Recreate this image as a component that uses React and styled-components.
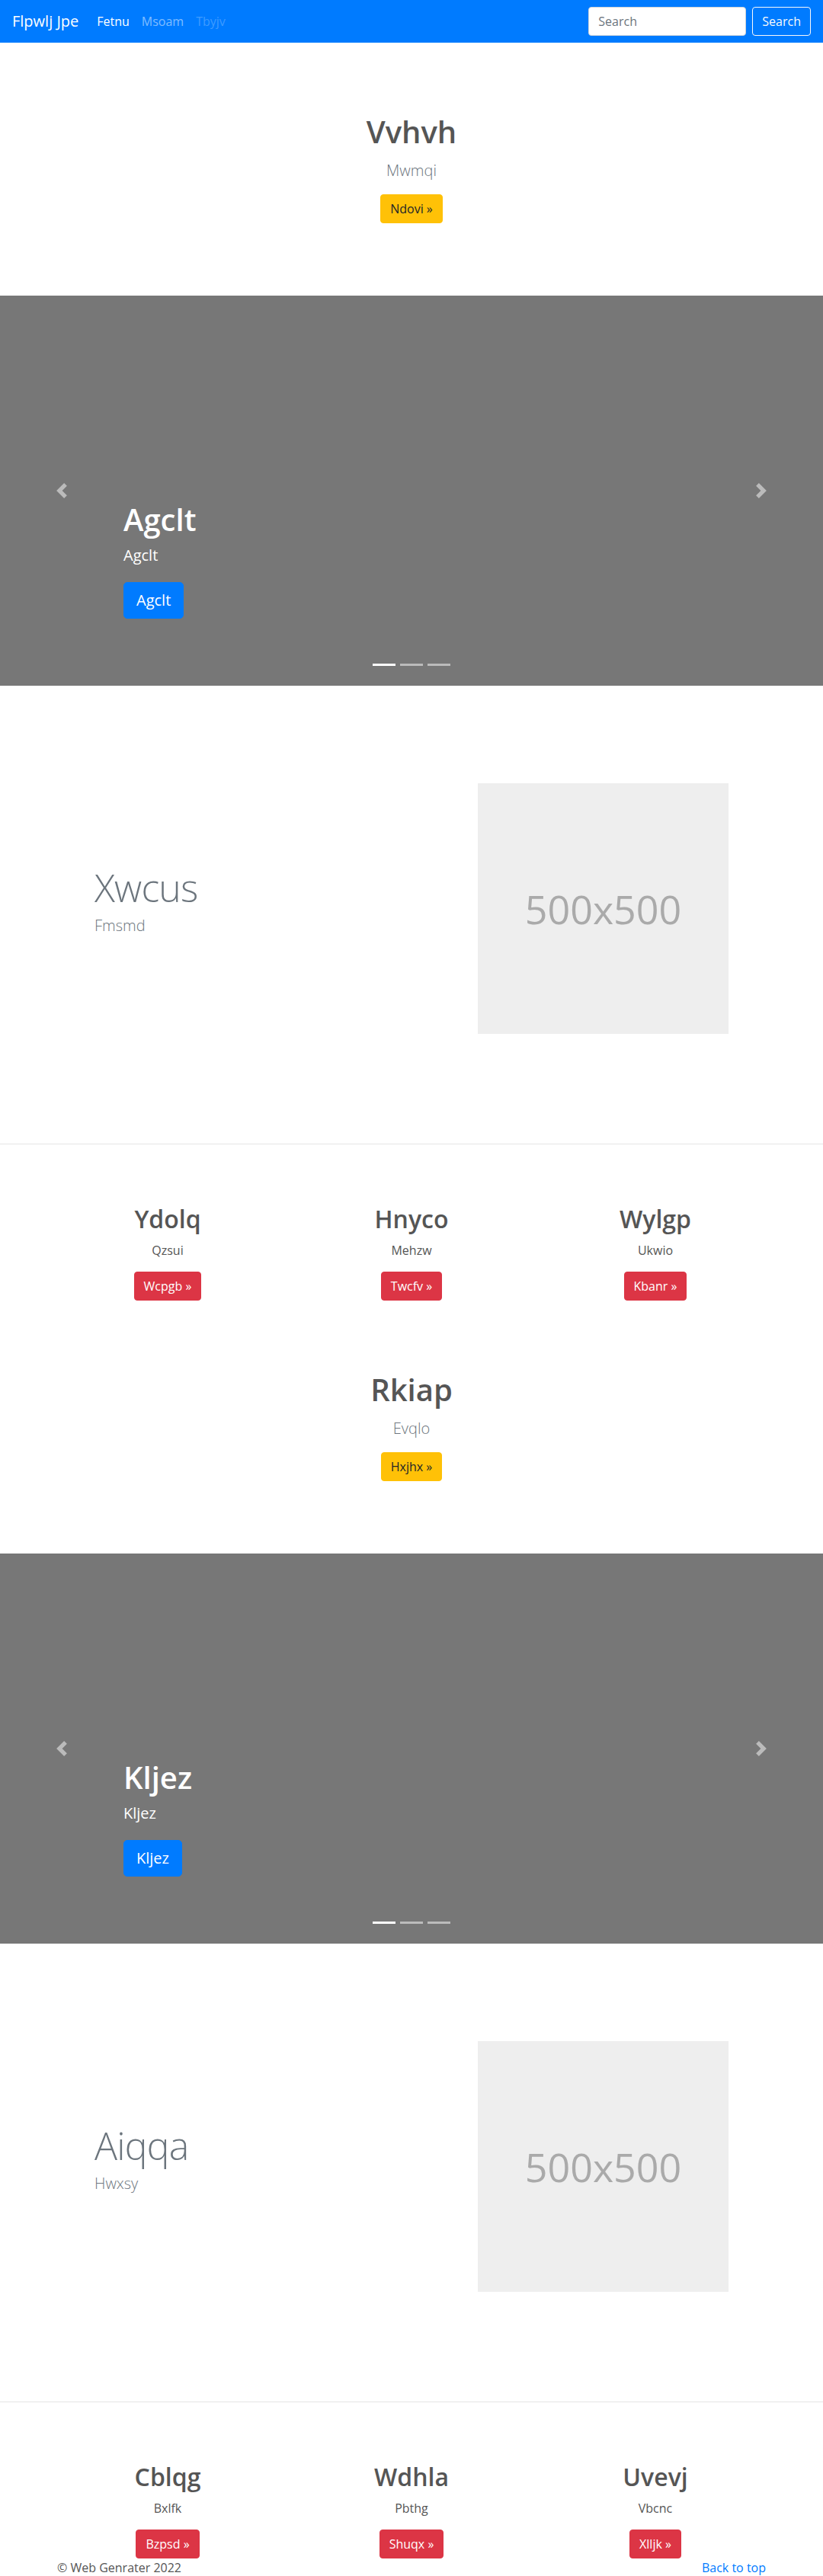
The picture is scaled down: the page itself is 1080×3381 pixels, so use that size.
import React from "react";
import styled, { createGlobalStyle } from "styled-components";

const GlobalStyle = createGlobalStyle`
  * { box-sizing: border-box; }
  body {
    margin: 0;
    font-family: "Open Sans", "Noto Sans", "Liberation Sans", sans-serif;
    font-size: 16px;
    line-height: 1.5;
    color: #212529;
    background: #fff;
  }
`;

const heroes = [
  { title: "Vvhvh", lead: "Mwmqi", button: "Ndovi »" },
  { title: "Rkiap", lead: "Evqlo", button: "Hxjhx »" },
];

const slides = ["Agclt", "Kljez"];

const features = [
  { title: "Xwcus", lead: "Fmsmd" },
  { title: "Aiqqa", lead: "Hwxsy" },
];

const columns = [
  [
    { title: "Ydolq", text: "Qzsui", button: "Wcpgb »" },
    { title: "Hnyco", text: "Mehzw", button: "Twcfv »" },
    { title: "Wylgp", text: "Ukwio", button: "Kbanr »" },
  ],
  [
    { title: "Cblqg", text: "Bxlfk", button: "Bzpsd »" },
    { title: "Wdhla", text: "Pbthg", button: "Shuqx »" },
    { title: "Uvevj", text: "Vbcnc", button: "Xlljk »" },
  ],
];

const Hero = ({ data }) => (
  <HeroSection>
    <HeroTitle>{data.title}</HeroTitle>
    <HeroLead>{data.lead}</HeroLead>
    <Button variant="warning">{data.button}</Button>
  </HeroSection>
);

const Chevron = ({ dir }) => (
  <svg width="20" height="20" viewBox="0 0 8 8" fill="#fff">
    {dir === "prev" ? (
      <path d="M5.25 0l-4 4 4 4 1.5-1.5L4.25 4l2.5-2.5L5.25 0z" />
    ) : (
      <path d="M2.75 0l-1.5 1.5L3.75 4l-2.5 2.5L2.75 8l4-4-4-4z" />
    )}
  </svg>
);

const Carousel = ({ label }) => (
  <CarouselBox>
    <Caption>
      <CaptionTitle>{label}</CaptionTitle>
      <CaptionText>{label}</CaptionText>
      <Button variant="primary" size="lg">
        {label}
      </Button>
    </Caption>
    <Control side="left">
      <Chevron dir="prev" />
    </Control>
    <Control side="right">
      <Chevron dir="next" />
    </Control>
    <Indicators>
      {[0, 1, 2].map((i) => (
        <Indicator key={i} active={i === 0} />
      ))}
    </Indicators>
  </CarouselBox>
);

const Featurette = ({ data }) => (
  <FeatureSection>
    <FeatureText>
      <FeatureHeading>{data.title}</FeatureHeading>
      <FeatureLead>{data.lead}</FeatureLead>
    </FeatureText>
    <Placeholder>500x500</Placeholder>
  </FeatureSection>
);

const Columns = ({ items }) => (
  <ColumnsSection>
    {items.map((item, index) => (
      <Column key={index}>
        <ColumnTitle>{item.title}</ColumnTitle>
        <ColumnText>{item.text}</ColumnText>
        <Button variant="danger">{item.button}</Button>
      </Column>
    ))}
  </ColumnsSection>
);

const App = () => {
  return (
    <>
      <GlobalStyle />
      <Navbar>
        <Brand>Flpwlj Jpe</Brand>
        <NavLinks>
          <NavLink state="active">Fetnu</NavLink>
          <NavLink>Msoam</NavLink>
          <NavLink state="disabled">Tbyjv</NavLink>
        </NavLinks>
        <SearchForm>
          <SearchInput placeholder="Search" />
          <OutlineButton>Search</OutlineButton>
        </SearchForm>
      </Navbar>

      <Hero data={heroes[0]} />
      <Carousel label={slides[0]} />
      <Featurette data={features[0]} />
      <Divider />
      <Columns items={columns[0]} />

      <Hero data={heroes[1]} />
      <Carousel label={slides[1]} />
      <Featurette data={features[1]} />
      <Divider />
      <Columns items={columns[1]} />

      <Footer>
        <FooterText>© Web Genrater 2022</FooterText>
        <BackLink href="#">Back to top</BackLink>
      </Footer>
    </>
  );
};

export default App;

const Navbar = styled.nav`
  display: flex;
  align-items: center;
  height: 56px;
  padding: 8px 16px;
  background-color: #007bff;
`;

const Brand = styled.a`
  font-size: 20px;
  line-height: 30px;
  color: #fff;
  margin-right: 16px;
`;

const NavLinks = styled.div`
  display: flex;
  flex: 1;
`;

const NavLink = styled.a`
  padding: 0 8px;
  font-size: 16px;
  font-weight: 500;
  color: ${(p) =>
    p.state === "active"
      ? "#fff"
      : p.state === "disabled"
      ? "rgba(255,255,255,0.25)"
      : "rgba(255,255,255,0.5)"};
`;

const SearchForm = styled.form`
  display: flex;
  gap: 8px;
`;

const SearchInput = styled.input`
  width: 207px;
  height: 38px;
  padding: 6px 12px;
  font-family: inherit;
  font-size: 16px;
  color: #495057;
  border: 1px solid #ced4da;
  border-radius: 4px;
  &::placeholder {
    color: #6c757d;
  }
`;

const OutlineButton = styled.button`
  height: 38px;
  padding: 6px 12px;
  font-family: inherit;
  font-size: 16px;
  line-height: 24px;
  color: #f8f9fa;
  background: transparent;
  border: 1px solid #f8f9fa;
  border-radius: 4px;
`;

const buttonColors = {
  warning: { bg: "#ffc107", fg: "#212529" },
  danger: { bg: "#dc3545", fg: "#fff" },
  primary: { bg: "#007bff", fg: "#fff" },
};

const Button = styled.a`
  display: inline-block;
  padding: ${(p) => (p.size === "lg" ? "8px 16px" : "6px 12px")};
  font-size: ${(p) => (p.size === "lg" ? "20px" : "16px")};
  line-height: 1.5;
  border: 1px solid ${(p) => buttonColors[p.variant].bg};
  border-radius: ${(p) => (p.size === "lg" ? "5px" : "4px")};
  background: ${(p) => buttonColors[p.variant].bg};
  color: ${(p) => buttonColors[p.variant].fg};
  text-decoration: none;
`;

const HeroSection = styled.section`
  display: flex;
  flex-direction: column;
  align-items: center;
  padding: 93px 0 95px;
  text-align: center;
`;

const HeroTitle = styled.h1`
  margin: 0 0 12px;
  font-size: 40px;
  line-height: 48px;
  font-weight: 600;
  color: #555;
`;

const HeroLead = styled.p`
  margin: 0 0 16px;
  font-size: 20px;
  line-height: 30px;
  font-weight: 300;
  color: #6c757d;
`;

const CarouselBox = styled.section`
  position: relative;
  height: 512px;
  background: #777;
  display: flex;
  flex-direction: column;
  justify-content: flex-end;
  padding: 0 15% 88px;
`;

const Caption = styled.div`
  display: flex;
  flex-direction: column;
  align-items: flex-start;
  color: #fff;
`;

const CaptionTitle = styled.h1`
  margin: 0 0 8px;
  font-size: 40px;
  line-height: 48px;
  font-weight: 600;
`;

const CaptionText = styled.p`
  margin: 0 0 20px;
  font-size: 20px;
  line-height: 30px;
`;

const Control = styled.a`
  position: absolute;
  top: 0;
  bottom: 0;
  ${(p) => p.side}: 0;
  width: 15%;
  display: flex;
  align-items: center;
  justify-content: center;
  opacity: 0.5;
`;

const Indicators = styled.div`
  position: absolute;
  left: 0;
  right: 0;
  bottom: 26px;
  display: flex;
  justify-content: center;
  gap: 6px;
`;

const Indicator = styled.span`
  width: 30px;
  height: 3px;
  background: #fff;
  opacity: ${(p) => (p.active ? 1 : 0.5)};
`;

const FeatureSection = styled.section`
  display: grid;
  grid-template-columns: 1fr 329px;
  align-items: center;
  padding: 128px 124px 144px;
`;

const FeatureText = styled.div`
  margin-bottom: 16px;
`;

const FeatureHeading = styled.h2`
  margin: 0 0 10px;
  font-size: 50px;
  line-height: 1;
  font-weight: 300;
  letter-spacing: -0.8px;
  color: #6c757d;
`;

const FeatureLead = styled.p`
  margin: 0;
  font-size: 20px;
  line-height: 30px;
  font-weight: 300;
  color: #6c757d;
`;

const Placeholder = styled.div`
  width: 329px;
  height: 329px;
  display: flex;
  align-items: center;
  justify-content: center;
  background: #eee;
  color: #aaa;
  font-size: 52px;
`;

const Divider = styled.hr`
  margin: 0;
  border: 0;
  border-top: 1px solid #e5e5e5;
`;

const ColumnsSection = styled.section`
  display: grid;
  grid-template-columns: repeat(3, 1fr);
  width: 960px;
  margin: 0 auto;
  padding-top: 79px;
`;

const Column = styled.div`
  display: flex;
  flex-direction: column;
  align-items: center;
  text-align: center;
`;

const ColumnTitle = styled.h2`
  margin: 0 0 10px;
  font-size: 32px;
  line-height: 38px;
  font-weight: 600;
  color: #555;
`;

const ColumnText = styled.p`
  margin: 0 0 16px;
  font-size: 16px;
  line-height: 24px;
  color: #555;
`;

const Footer = styled.footer`
  display: flex;
  justify-content: space-between;
  width: 960px;
  margin: 0 auto;
  padding: 0 15px;
`;

const FooterText = styled.p`
  margin: 0;
  font-size: 16px;
  line-height: 24px;
  color: #555;
`;

const BackLink = styled.a`
  font-size: 16px;
  line-height: 24px;
  color: #007bff;
  text-decoration: none;
`;
